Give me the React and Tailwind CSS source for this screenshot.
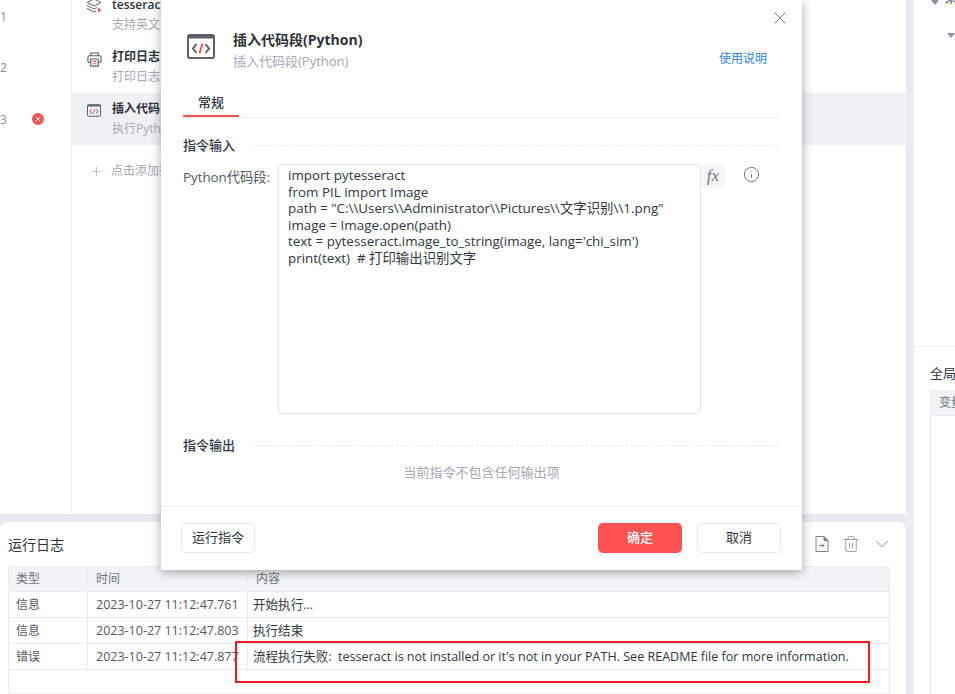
import { X, Info, ChevronDown, Trash2, Plus } from 'lucide-react';

const font = 'font-["Open_Sans","Noto_Sans_CJK_SC",sans-serif]';

const CodeIcon = ({ width = 14, height = 13 }) => (
  <svg width={width} height={height} viewBox="0 0 28 25" fill="none">
    <rect x="1" y="1" width="26" height="23" rx="2" stroke="#5f6068" strokeWidth="2" />
    <rect x="1" y="1" width="26" height="3.5" fill="#5f6068" />
    <path d="M9.500 10 6 14.500 9.500 19M18.500 10l3.500 4.500-3.500 4.500" stroke="#5f6068" strokeWidth="2" />
    <path d="M15.500 9.500l-3 10" stroke="#f25555" strokeWidth="2" />
  </svg>
);

const LayersIcon = () => (
  <svg width="16" height="16" viewBox="0 0 16 16" fill="none" stroke="#5f6068" strokeWidth="1">
    <path d="M8 1 1 4.500 8 8l7-3.500L8 1Z" />
    <path d="M1 7.500 8 11l3-1.500M1 10.500 8 14l2-1" />
    <path d="M12 9.500v5l3.500-2.500L12 9.500Z" fill="#f25555" stroke="none" />
  </svg>
);

const PrinterIcon = () => (
  <svg width="15" height="15" viewBox="0 0 16 16" fill="none" stroke="#5f6068" strokeWidth="1.200">
    <path d="M4 4V1h8v3" />
    <path d="M4 11H2.500A1.500 1.500 0 0 1 1 9.500v-4A1.500 1.500 0 0 1 2.500 4h11A1.500 1.500 0 0 1 15 5.500v4a1.500 1.500 0 0 1-1.500 1.500H12" />
    <path d="M4 7.500h8V15H4z" />
    <path d="M6 10h4M6 12.500h4" stroke="#f25555" />
  </svg>
);

const ExportIcon = () => (
  <svg width="14" height="16" viewBox="0 0 14 16" fill="none" stroke="#7f8494" strokeWidth="1">
    <path d="M1 .500h8l4 4v11H1z" />
    <path d="M9 .500v4h4" fill="#7f8494" />
    <path d="M4 9.500h5M7 7.500l2 2-2 2" />
  </svg>
);

const steps = [
  { n: 1, icon: <LayersIcon />, title: 'tesseract', sub: '支持英文', h: 'h-[38px]', pad: '-mt-[5px]', iconTop: 'top-[-2px]', left: 'left-[14px]' },
  { n: 2, icon: <PrinterIcon />, title: '打印日志', sub: '打印日志', h: 'h-[55px]', pad: 'pt-[9px]', iconTop: 'top-[14px]', left: 'left-[15px]' },
  { n: 3, icon: <CodeIcon />, title: '插入代码', sub: '执行Python', h: 'h-[52px]', pad: 'pt-[6px]', iconTop: 'top-[11px]', left: 'left-[15px]', active: true },
];

const logs = [
  ['信息', '2023-10-27 11:12:47.761', '开始执行...'],
  ['信息', '2023-10-27 11:12:47.803', '执行结束'],
  ['错误', '2023-10-27 11:12:47.877', '流程执行失败:  tesseract is not installed or it\'s not in your PATH. See README file for more information.'],
];

const code = `import pytesseract
from PIL import Image
path = "C:\\\\Users\\\\Administrator\\\\Pictures\\\\文字识别\\\\1.png"
image = Image.open(path)
text = pytesseract.image_to_string(image, lang='chi_sim')
print(text)  # 打印输出识别文字`;

const SectionTitle = ({ children }) => (
  <div className="flex items-center gap-5 h-[20px]">
    <span className="text-[13px] font-medium text-[#33363f] leading-5">{children}</span>
    <div className="flex-1 border-t border-dashed border-[#e8e9ef]" />
  </div>
);

const App = () => {
  return (
    <div className={`relative w-[955px] h-[694px] overflow-hidden bg-[#eaebf0] flex gap-2 ${font}`}>
      {/* Main column */}
      <div className="w-[906px] shrink-0 flex flex-col gap-2">
        {/* Flow steps */}
        <div className="h-[514px] shrink-0 bg-white flex">
          <div className="w-[72px] border-r border-[#eeeff3]" />
          <div className="flex-1">
            {steps.map((s) => (
              <div key={s.n} className={`${s.h} relative flow-root ${s.active ? 'bg-[#f0f1f5]' : ''}`}>
                <div className={`absolute ${s.left} ${s.iconTop}`}>{s.icon}</div>
                <div className={`pl-[40px] ${s.pad}`}>
                  <p className="text-[12px] font-semibold text-[#2f323a] leading-5">{s.title}</p>
                  <p className="text-[12px] text-[#a5a8b5] leading-[19px]">{s.sub}</p>
                </div>
              </div>
            ))}
            <div className="flex items-center h-[52px] pl-[17px] gap-[7px] text-[12px] text-[#a5a8b5]">
              <Plus size={15} strokeWidth={1.1} />
              <span>点击添加指令</span>
            </div>
          </div>
        </div>

        {/* Run log */}
        <div className="flex-1 min-h-0 bg-white rounded-t-lg px-2">
          <div className="h-[44px] flex items-center justify-between">
            <span className="text-[14px] text-[#33363f]">运行日志</span>
            <div className="flex items-center text-[#7f8494] mr-[5px]">
              <ExportIcon />
              <Trash2 size={18} strokeWidth={1} className="ml-[13px]" />
              <ChevronDown size={22} strokeWidth={1} className="ml-[11px]" />
            </div>
          </div>
          <div className="border border-[#eaebf0] rounded-t-[3px] h-[128px] w-[882px] text-[12px] text-[#555862]">
            <div className="flex h-[25px] bg-[#f3f4f7] border-b border-[#eaebf0] items-center">
              <span className="w-[79px] pl-[7px] border-r border-[#eaebf0] leading-[24px] text-[#6f7280]">类型</span>
              <span className="w-[160px] pl-2 border-r border-[#eaebf0] leading-[24px] text-[#6f7280]">时间</span>
              <span className="pl-2 text-[#6f7280]">内容</span>
            </div>
            {logs.map((row, i) => (
              <div key={i} className="flex h-[26px] border-b border-[#eaebf0]">
                <span className="w-[79px] pl-[7px] border-r border-[#eaebf0] leading-[25px]">{row[0]}</span>
                <span className="w-[160px] pl-2 border-r border-[#eaebf0] leading-[25px] text-[12.5px] whitespace-nowrap overflow-hidden">{row[1]}</span>
                <span className="pl-[5px] leading-[25px] text-[12.55px] whitespace-pre text-[#33363f]">{row[2]}</span>
              </div>
            ))}
          </div>
        </div>
      </div>

      {/* Right column */}
      <div className="flex-1 min-w-0 flex flex-col bg-white">
        <div className="h-[347px] shrink-0 relative overflow-hidden border-b border-[#eeeff3]">
          <span className="absolute left-[17px] top-0 border-x-[4px] border-t-[5px] border-x-transparent border-t-[#8a8fa3]" />
          <span className="absolute left-[31px] top-[-7px] text-[12px] leading-[12px] text-[#33363f]">来</span>
          <span className="absolute left-[33px] top-[33px] border-x-[4px] border-t-[5px] border-x-transparent border-t-[#8a8fa3]" />
        </div>
        <div className="pl-4 pt-[17px] text-[13px] text-[#33363f] whitespace-nowrap overflow-hidden">全局</div>
        <div className="ml-4 mt-[6px] flex-1 border-l border-t border-[#eaebf0] rounded-tl-[3px] overflow-hidden">
          <div className="h-[25px] bg-[#f3f4f7] border-b border-[#eaebf0] pl-2 text-[12px] leading-6 text-[#6f7280] whitespace-nowrap">变量</div>
        </div>
      </div>

      {/* Modal */}
      <div className="absolute left-[161px] top-0 w-[641px] h-[570px] bg-white shadow-[0_2px_10px_rgba(0,0,0,0.35)] flex flex-col">
        <div className="h-[92px] shrink-0 flex pl-[26px] pr-[35px] relative">
          <button className="absolute right-[12px] top-[8px] text-[#5f6068]">
            <X size={20} strokeWidth={1} />
          </button>
          <div className="pt-[34px]"><CodeIcon width={28} height={25} /></div>
          <div className="pl-[18px] pt-[30px] flex-1">
            <p className="text-[14px] font-bold text-[#2f323a] leading-5">插入代码段(Python)</p>
            <p className="text-[13px] text-[#a5a8b5] leading-[20px] mt-[1px]">插入代码段(Python)</p>
          </div>
          <a className="mt-[49px] text-[12px] text-[#2b85e4] leading-5">使用说明</a>
        </div>
        <div className="ml-[22px] mr-[23px] h-[26px] flex border-b border-[#eeeff3]">
          <span className="block w-[56px] h-[25px] text-center text-[13px] font-medium text-[#33363f] leading-[20px] border-b-2 border-[#f25555]">常规</span>
        </div>
        <div className="ml-[22px] mr-[23px] mt-[17px]">
          <SectionTitle>指令输入</SectionTitle>
        </div>
        <div className="flex mx-[22px] mt-[9px]">
          <span className="w-[95px] text-[13.300px] text-[#555862] leading-6 whitespace-nowrap pt-[1px]">Python代码段:</span>
          <div className="w-[423px] h-[250px] border border-[#e3e4ea] rounded-[4px] pl-[9px] pt-[2px] text-[13.400px] leading-[16.500px] text-[#33363f] whitespace-pre overflow-hidden">{code}</div>
          <div className="w-[24px] h-[24px] bg-[#f7f7f9] flex items-center justify-center italic text-[17px] text-[#6f7280] font-['Liberation_Serif',serif]">fx</div>
          <Info size={17} strokeWidth={1.2} className="ml-[18px] mt-[2px] text-[#5f6068]" />
        </div>
        <div className="ml-[22px] mr-[23px] mt-[21px]">
          <SectionTitle>指令输出</SectionTitle>
        </div>
        <p className="text-center text-[13px] text-[#a5a8b5] mt-[7px] leading-5">当前指令不包含任何输出项</p>
        <div className="mt-auto h-[64px] border-t border-[#eeeff3] flex items-start pt-[16px] pl-5 pr-[21px]">
          <button className="w-[74px] h-[30px] border border-[#e6e7ed] rounded-[5px] text-[13px] text-[#33363f]">运行指令</button>
          <button className="ml-auto w-[84px] h-[30px] bg-[#fd5353] rounded-[5px] text-[13px] text-white font-medium">确定</button>
          <button className="ml-[15px] w-[84px] h-[30px] border border-[#e6e7ed] rounded-[5px] text-[13px] text-[#33363f]">取消</button>
        </div>
      </div>

      {/* Step numbers */}
      <span className="absolute left-0 top-[8px] text-[12px] text-[#8a8d99]">1</span>
      <span className="absolute left-0 top-[59px] text-[12px] text-[#8a8d99]">2</span>
      <span className="absolute left-0 top-[111px] text-[12px] text-[#8a8d99]">3</span>
      <span className="absolute left-[32px] top-[113px] w-3 h-3 rounded-full bg-[#f25555] flex items-center justify-center text-white">
        <X size={8} strokeWidth={3} />
      </span>

      {/* Screenshot annotation */}
      <div className="absolute left-[235px] top-[641px] w-[635px] h-[42px] border-2 border-[#ed1c24]" />
    </div>
  );
};

export default App;
